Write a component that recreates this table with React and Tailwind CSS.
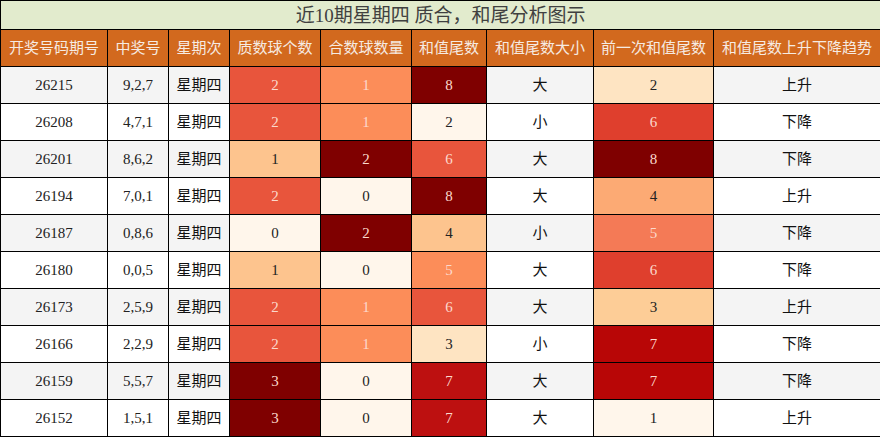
const FONT = { fontFamily: '"Liberation Serif", "Noto Sans CJK SC", serif' }

const HEAD = ['开奖号码期号', '中奖号', '星期次', '质数球个数', '合数球数量', '和值尾数', '和值尾数大小', '前一次和值尾数', '和值尾数上升下降趋势']
const WIDTHS = ['w-[107px]', 'w-[61px]', 'w-[61px]', 'w-[91px]', 'w-[91px]', 'w-[75px]', 'w-[107px]', 'w-[120px]', 'w-[167px]']

// [bg class, light text?]
const C = {
  d8: ['bg-[#7f0000]', true],
  r7: ['bg-[#b80606]', true],
  r7b: ['bg-[#bd1010]', true],
  r6: ['bg-[#df3f2d]', true],
  o2: ['bg-[#e8553c]', true],
  o5: ['bg-[#f47a56]', true],
  o1: ['bg-[#fc8d59]', true],
  p4: ['bg-[#fcaa74]', false],
  p1: ['bg-[#fdc48e]', false],
  p3: ['bg-[#fdcd97]', false],
  y2: ['bg-[#fee4c2]', false],
  w0: ['bg-[#fff6eb]', false],
}

const ROWS = [
  ['26215', '9,2,7', [2, 'o2'], [1, 'o1'], [8, 'd8'], '大', [2, 'y2'], '上升'],
  ['26208', '4,7,1', [2, 'o2'], [1, 'o1'], [2, 'w0'], '小', [6, 'r6'], '下降'],
  ['26201', '8,6,2', [1, 'p1'], [2, 'd8'], [6, 'o2'], '大', [8, 'd8'], '下降'],
  ['26194', '7,0,1', [2, 'o2'], [0, 'w0'], [8, 'd8'], '大', [4, 'p4'], '上升'],
  ['26187', '0,8,6', [0, 'w0'], [2, 'd8'], [4, 'p1'], '小', [5, 'o5'], '下降'],
  ['26180', '0,0,5', [1, 'p1'], [0, 'w0'], [5, 'o1'], '大', [6, 'r6'], '下降'],
  ['26173', '2,5,9', [2, 'o2'], [1, 'o1'], [6, 'o2'], '大', [3, 'p3'], '上升'],
  ['26166', '2,2,9', [2, 'o2'], [1, 'o1'], [3, 'y2'], '小', [7, 'r7'], '下降'],
  ['26159', '5,5,7', [3, 'd8'], [0, 'w0'], [7, 'r7b'], '大', [7, 'r7'], '下降'],
  ['26152', '1,5,1', [3, 'd8'], [0, 'w0'], [7, 'r7b'], '大', [1, 'w0'], '上升'],
]

function HeatCell({ cell }) {
  const [v, key] = cell
  const [bg, light] = C[key]
  return (
    <td className={`border border-black text-center ${bg} ${light ? 'text-[#fcd9cc]' : 'text-[#222]'}`}>{v}</td>
  )
}

export default function App() {
  return (
    <div className="w-[880px] h-[437px] bg-white" style={FONT}>
      <table className="w-[880px] border-collapse table-fixed text-[15px] leading-none">
        <colgroup>
          {WIDTHS.map((w, i) => <col key={i} className={w} />)}
        </colgroup>
        <thead>
          <tr className="h-[29px]">
            <th colSpan={9} className="border border-black bg-[#e2ebcd] text-[#404040] text-[19px] font-normal text-center">
              近10期星期四 质合，和尾分析图示
            </th>
          </tr>
          <tr className="h-[37px]">
            {HEAD.map((h) => (
              <th key={h} className="border border-black bg-[#d2691e] text-[#f6ebe2] font-normal text-center whitespace-nowrap">{h}</th>
            ))}
          </tr>
        </thead>
        <tbody>
          {ROWS.map((r, i) => {
            const plain = i % 2 === 0 ? 'bg-[#f4f4f4]' : 'bg-white'
            return (
              <tr key={r[0]} className="h-[37px]">
                <td className={`border border-black text-center text-[#222] ${plain}`}>{r[0]}</td>
                <td className={`border border-black text-center text-[#222] ${plain}`}>{r[1]}</td>
                <td className={`border border-black text-center text-[#111] ${plain}`}>星期四</td>
                <HeatCell cell={r[2]} />
                <HeatCell cell={r[3]} />
                <HeatCell cell={r[4]} />
                <td className={`border border-black text-center text-[#111] ${plain}`}>{r[5]}</td>
                <HeatCell cell={r[6]} />
                <td className={`border border-black text-center text-[#111] ${plain}`}>{r[7]}</td>
              </tr>
            )
          })}
        </tbody>
      </table>
    </div>
  )
}
